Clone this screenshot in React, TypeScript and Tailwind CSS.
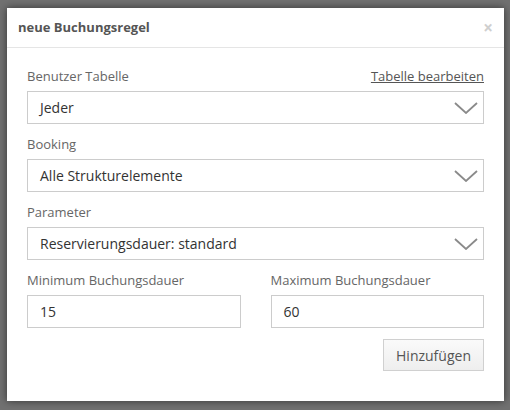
import React from "react";

const font = { fontFamily: '"Open Sans", "Liberation Sans", sans-serif' };

function Chevron() {
  return (
    <svg viewBox="0 0 24 12" className="w-[24px] h-[12px]" fill="none" stroke="#8a8a8a" strokeWidth={1.8}>
      <polyline points="1 1 12 11 23 1" />
    </svg>
  );
}

function SelectField({ label, value, extra }: { label: string; value: string; extra?: React.ReactNode }) {
  return (
    <div className="mb-3">
      <div className="flex items-center justify-between h-[18px] mb-[5px] text-[13px] text-[#666]">
        <span>{label}</span>
        {extra}
      </div>
      <div className="flex items-center justify-between h-[33px] border border-[#cccccc] bg-white pl-[12px] pr-[5px]">
        <span className="text-[14px] text-[#333]">{value}</span>
        <Chevron />
      </div>
    </div>
  );
}

function InputField({ label, value }: { label: string; value: string }) {
  return (
    <div>
      <div className="h-[18px] mb-[5px] text-[13px] text-[#666] flex items-center">{label}</div>
      <div className="flex items-center h-[33px] border border-[#cccccc] bg-white pl-[12px] text-[14px] text-[#333]">
        {value}
      </div>
    </div>
  );
}

export default function App() {
  return (
    <div className="w-[510px] h-[410px] bg-[#717171] pt-[8px] pl-[7px]" style={font}>
      <div className="w-[497px] h-[393px] bg-white shadow-[0_0_8px_rgba(0,0,0,0.55)] flex flex-col">
        {/* Header */}
        <div className="flex items-center justify-between h-[40px] border-b border-[#e5e5e5] pl-[11px] pr-[11px]">
          <span className="text-[13px] font-bold text-[#555]">neue Buchungsregel</span>
          <span className="text-[17px] font-bold text-[#cfcfcf] leading-none">×</span>
        </div>

        {/* Body */}
        <div className="px-[20px] pt-[20px]">
          <SelectField
            label="Benutzer Tabelle"
            value="Jeder"
            extra={<span className="underline text-[#555]">Tabelle bearbeiten</span>}
          />
          <SelectField label="Booking" value="Alle Strukturelemente" />
          <SelectField label="Parameter" value="Reservierungsdauer: standard" />
          <div className="grid grid-cols-2 gap-[30px]">
            <InputField label="Minimum Buchungsdauer" value="15" />
            <InputField label="Maximum Buchungsdauer" value="60" />
          </div>
          <div className="flex justify-end mt-[11px]">
            <button className="w-[101px] h-[32px] border border-[#d0d0d0] bg-gradient-to-b from-[#fafafa] to-[#eeeeee] text-[14px] text-[#555]">
              Hinzufügen
            </button>
          </div>
        </div>
      </div>
    </div>
  );
}
